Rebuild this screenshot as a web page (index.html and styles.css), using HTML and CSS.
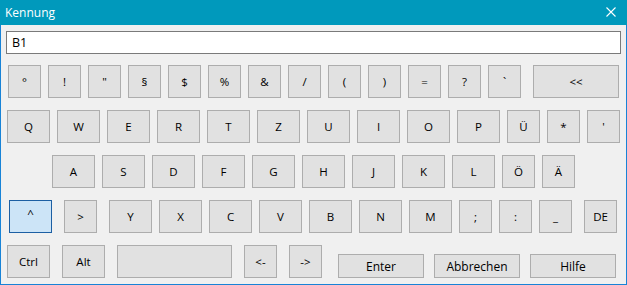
FILE: index.html
```html
<!DOCTYPE html>
<html lang="de">
<head>
  <meta charset="UTF-8" />
  <title>Kennung</title>
  <link rel="stylesheet" href="styles.css">
</head>
<body>
<div class="window">
  <div class="title-bar">
    <span class="title">Kennung</span>
    <svg class="close" width="10" height="10" viewBox="0 0 10 10">
      <path d="M0.5 0.5 L9.5 9.5 M9.5 0.5 L0.5 9.5" stroke="#fff" stroke-width="1.1" fill="none"/>
    </svg>
  </div>

  <div class="content">
    <input type="text" class="entry" value="B1" spellcheck="false">

    <div class="keys">
      <div class="row row-1">
        <button class="key">°</button>
        <button class="key">!</button>
        <button class="key">"</button>
        <button class="key">§</button>
        <button class="key">$</button>
        <button class="key">%</button>
        <button class="key">&amp;</button>
        <button class="key">/</button>
        <button class="key">(</button>
        <button class="key">)</button>
        <button class="key">=</button>
        <button class="key">?</button>
        <button class="key">`</button>
        <button class="key key-back spaced">&lt;&lt;</button>
      </div>

      <div class="row row-2">
        <button class="key wide">Q</button>
        <button class="key wide">W</button>
        <button class="key wide">E</button>
        <button class="key wide">R</button>
        <button class="key wide">T</button>
        <button class="key wide">Z</button>
        <button class="key wide">U</button>
        <button class="key wide">I</button>
        <button class="key wide">O</button>
        <button class="key wide">P</button>
        <button class="key">Ü</button>
        <button class="key">*</button>
        <button class="key">'</button>
      </div>

      <div class="row row-3">
        <button class="key wide">A</button>
        <button class="key wide">S</button>
        <button class="key wide">D</button>
        <button class="key wide">F</button>
        <button class="key wide">G</button>
        <button class="key wide">H</button>
        <button class="key wide">J</button>
        <button class="key wide">K</button>
        <button class="key wide">L</button>
        <button class="key">Ö</button>
        <button class="key">Ä</button>
      </div>

      <div class="row row-4">
        <button class="key wide active">^</button>
        <button class="key spaced">&gt;</button>
        <button class="key wide spaced">Y</button>
        <button class="key wide">X</button>
        <button class="key wide">C</button>
        <button class="key wide">V</button>
        <button class="key wide">B</button>
        <button class="key wide">N</button>
        <button class="key wide">M</button>
        <button class="key">;</button>
        <button class="key">:</button>
        <button class="key">_</button>
        <button class="key spaced">DE</button>
      </div>

      <div class="row row-5">
        <button class="key wide">Ctrl</button>
        <button class="key wide">Alt</button>
        <button class="key key-space"></button>
        <button class="key">&lt;-</button>
        <button class="key">-&gt;</button>
        <button class="action enter">Enter</button>
        <button class="action">Abbrechen</button>
        <button class="action">Hilfe</button>
      </div>
    </div>
  </div>
</div>
</body>
</html>
```

FILE: styles.css
```css
body {
  margin: 0;
  font-family: 'Open Sans', 'Noto Sans', sans-serif;
  background-color: #f0f0f0;
}

.window {
  width: 627px;
  height: 285px;
  box-sizing: border-box;
  border: 1px solid #1883d7;
  border-top: none;
  background-color: #f0f0f0;
  display: flex;
  flex-direction: column;
}

.title-bar {
  height: 25px;
  margin: 0 -1px;
  background-color: #0099bc;
  display: flex;
  align-items: center;
  justify-content: space-between;
  padding: 0 11px 0 5px;
  flex-shrink: 0;
}

.title {
  color: #ffffff;
  font-size: 12px;
  padding-bottom: 1px;
}

.close {
  display: block;
  margin-bottom: 1px;
}

.content {
  padding: 6px 0 0 5px;
}

.entry {
  display: block;
  width: 615px;
  height: 23px;
  box-sizing: border-box;
  margin: 0;
  border: 1px solid #7a7a7a;
  background-color: #ffffff;
  padding: 0 0 0 5px;
  font-family: 'Open Sans', 'Noto Sans', sans-serif;
  font-size: 12.5px;
  color: #000000;
  outline: none;
}

.keys {
  display: flex;
  flex-direction: column;
  gap: 12px;
  margin-top: 11px;
  margin-left: -5px;
}

.row {
  display: flex;
  gap: 7px;
  align-items: flex-end;
}

.row-1 { margin-left: 7px; }
.row-2 { margin-left: 6px; }
.row-3 { margin-left: 51px; }
.row-4 { margin-left: 8px; }
.row-5 { margin-left: 6px; gap: 12px; }

.key,
.action {
  width: 33px;
  height: 33px;
  box-sizing: border-box;
  margin: 0;
  padding: 0;
  border: 1px solid #adadad;
  background-color: #e1e1e1;
  font-family: 'Open Sans', 'Noto Sans', sans-serif;
  font-size: 11.5px;
  color: #000000;
  cursor: pointer;
  flex-shrink: 0;
}

.key.wide {
  width: 43px;
}

.key.spaced {
  margin-left: 5px;
}

.key-back {
  width: 86px;
}

.key-space {
  width: 115px;
}

.key.active {
  border-color: #1c5fa3;
  background-color: #cce4f7;
  padding-bottom: 6px;
}

.action {
  width: 86px;
  height: 24px;
  margin-left: -2px;
  font-size: 12px;
}

.action.enter {
  margin-left: 4px;
}
```
